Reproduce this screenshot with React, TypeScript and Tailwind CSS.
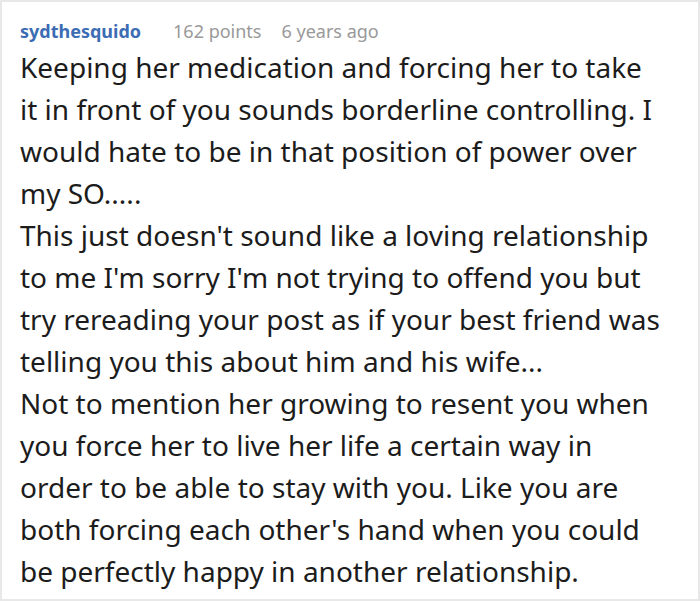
import React from "react";

const paragraphs = [
  "Keeping her medication and forcing her to take it in front of you sounds borderline controlling. I would hate to be in that position of power over my SO.....",
  "This just doesn't sound like a loving relationship to me I'm sorry I'm not trying to offend you but try rereading your post as if your best friend was telling you this about him and his wife...",
  "Not to mention her growing to resent you when you force her to live her life a certain way in order to be able to stay with you. Like you are both forcing each other's hand when you could be perfectly happy in another relationship.",
];

export default function App() {
  return (
    <div
      className="w-[700px] h-[601px] bg-white border-2 border-[#e8e8e8] overflow-hidden"
      style={{ fontFamily: '"Noto Sans", sans-serif' }}
    >
      <div className="pl-[18px] pr-[32px] pt-[15px]">
        <div className="flex items-center text-[18px] leading-[28px]">
          <span className="font-bold text-[#3b6cb4]">sydthesquido</span>
          <span className="ml-[32px] text-[#999999]">162 points</span>
          <span className="ml-[20px] text-[#999999]">6 years ago</span>
        </div>
        <div className="mt-[1px] text-[28px] leading-[42px] text-[#1c1c1c]">
          {paragraphs.map((p, i) => (
            <p key={i}>{p}</p>
          ))}
        </div>
      </div>
    </div>
  );
}
